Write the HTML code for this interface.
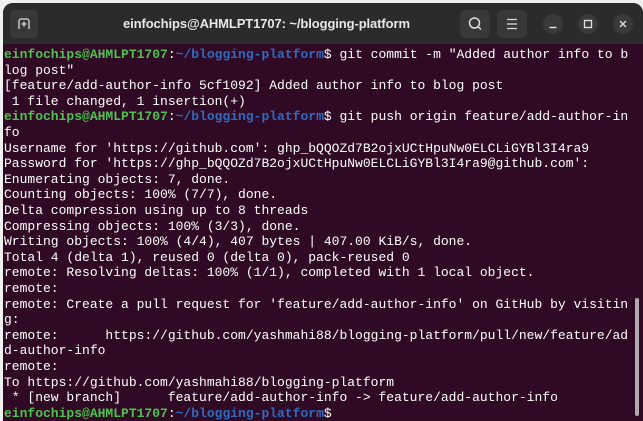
<!DOCTYPE html>
<html><head><meta charset="utf-8"><style>
html,body{margin:0;padding:0;width:643px;height:421px;overflow:hidden;background:#f0f0f0;}
.win{position:absolute;left:3px;top:3px;width:640px;height:418px;background:#300a24;border-radius:10px 10px 0 0;overflow:hidden;}
.tb{position:absolute;left:0;top:0;width:100%;height:41px;background:#2b2b2b;}
.btn{position:absolute;top:7px;width:30px;height:28px;border-radius:5px;background:#383838;}
.circ{position:absolute;top:11px;width:20px;height:20px;border-radius:50%;background:#3a3a3a;}
.title{position:absolute;left:120px;top:13px;color:#e8e8e8;font:bold 13px "Liberation Sans",sans-serif;letter-spacing:-0.1px;white-space:nowrap;}
.term{position:absolute;left:1px;top:2px;font:13px "Liberation Mono",monospace;color:#ffffff;white-space:pre;}
.term div{position:absolute;left:0;height:16px;line-height:16px;}
.g{color:#4ec24e;font-weight:bold;}
.b{color:#2f6bbf;font-weight:bold;}
.sb{position:absolute;left:632px;top:295px;width:4px;height:118px;border-radius:2px;background:#b0aab0;}
</style></head><body>
<div class="win">
<div class="tb">
<div class="btn" style="left:7px;width:28px"><svg width="28" height="28"><path d="M9 19V11a2 2 0 0 1 2-2h6a2 2 0 0 1 2 2v8" fill="none" stroke="#ddd" stroke-width="1.3"/><path d="M14 11.5v5M11.5 14h5" stroke="#ddd" stroke-width="1.3"/></svg></div>
<div class="title">einfochips@AHMLPT1707: ~/blogging-platform</div>
<div class="btn" style="left:457px"><svg width="30" height="28"><circle cx="14.5" cy="13" r="5" fill="none" stroke="#ddd" stroke-width="1.5"/><path d="M18 16.5l3 3" stroke="#ddd" stroke-width="1.5"/></svg></div>
<div class="btn" style="left:494px"><svg width="30" height="28"><path d="M10 9.5h10M10 14h10M10 18.5h10" stroke="#ddd" stroke-width="1.3"/></svg></div>
<div class="circ" style="left:540px"><svg width="20" height="20"><path d="M6.5 13.5h7" stroke="#ddd" stroke-width="1.4"/></svg></div>
<div class="circ" style="left:575px"><svg width="20" height="20"><rect x="6.5" y="6.5" width="7" height="7" fill="none" stroke="#ddd" stroke-width="1.4"/></svg></div>
<div class="circ" style="left:610px"><svg width="20" height="20"><path d="M7 7l6 6M13 7l-6 6" stroke="#ddd" stroke-width="1.4"/></svg></div>
</div>
<div class="term">
<div style="top:42px"><span class="g">einfochips@AHMLPT1707</span>:<span class="b">~/blogging-platform</span>$ git commit -m "Added author info to b</div>
<div style="top:57.6px">log post"</div>
<div style="top:73.2px">[feature/add-author-info 5cf1092] Added author info to blog post</div>
<div style="top:88.8px"> 1 file changed, 1 insertion(+)</div>
<div style="top:104.4px"><span class="g">einfochips@AHMLPT1707</span>:<span class="b">~/blogging-platform</span>$ git push origin feature/add-author-in</div>
<div style="top:120px">fo</div>
<div style="top:135.6px">Username for 'https://github.com': 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</div>
<div style="top:151.2px">Password for 'https://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@github.com':</div>
<div style="top:166.8px">Enumerating objects: 7, done.</div>
<div style="top:182.4px">Counting objects: 100% (7/7), done.</div>
<div style="top:198px">Delta compression using up to 8 threads</div>
<div style="top:213.6px">Compressing objects: 100% (3/3), done.</div>
<div style="top:229.2px">Writing objects: 100% (4/4), 407 bytes | 407.00 KiB/s, done.</div>
<div style="top:244.8px">Total 4 (delta 1), reused 0 (delta 0), pack-reused 0</div>
<div style="top:260.4px">remote: Resolving deltas: 100% (1/1), completed with 1 local object.</div>
<div style="top:276px">remote:</div>
<div style="top:291.6px">remote: Create a pull request for 'feature/add-author-info' on GitHub by visitin</div>
<div style="top:307.2px">g:</div>
<div style="top:322.8px">remote:      https://github.com/yashmahi88/blogging-platform/pull/new/feature/ad</div>
<div style="top:338.4px">d-author-info</div>
<div style="top:354px">remote:</div>
<div style="top:369.6px">To https://github.com/yashmahi88/blogging-platform</div>
<div style="top:385.2px"> * [new branch]      feature/add-author-info -&gt; feature/add-author-info</div>
<div style="top:400.8px"><span class="g">einfochips@AHMLPT1707</span>:<span class="b">~/blogging-platform</span>$</div>
</div>
<div class="sb"></div>
</div>
</body></html>
